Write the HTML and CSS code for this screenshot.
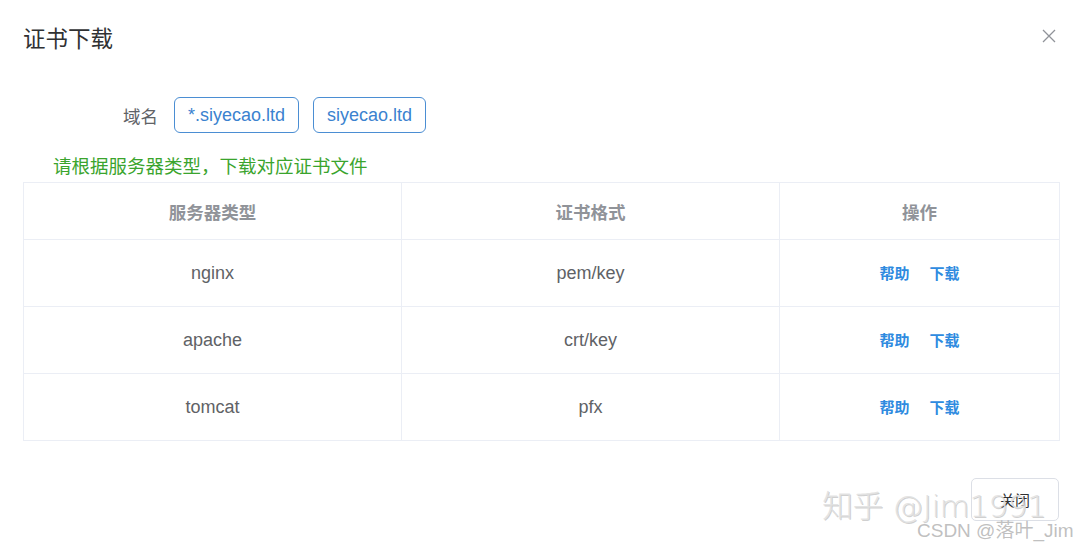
FILE: index.html
```html
<!DOCTYPE html>
<html lang="zh">
<head>
<meta charset="utf-8">
<link rel="stylesheet" href="styles.css">
</head>
<body>
<div class="dialog">
  <div class="header">
    <div class="title">证书下载</div>
    <svg class="close" width="14" height="14" viewBox="0 0 14 14"><path d="M1 1L13 13M13 1L1 13" stroke="#909399" stroke-width="1.3" fill="none"/></svg>
  </div>
  <div class="form-row">
    <div class="label">域名</div>
    <div class="tags">
      <span class="tag">*.siyecao.ltd</span>
      <span class="tag">siyecao.ltd</span>
    </div>
  </div>
  <div class="hint">请根据服务器类型，下载对应证书文件</div>
  <table class="table">
    <thead>
      <tr><th>服务器类型</th><th>证书格式</th><th>操作</th></tr>
    </thead>
    <tbody>
      <tr><td>nginx</td><td>pem/key</td><td><a class="link">帮助</a><a class="link">下载</a></td></tr>
      <tr><td>apache</td><td>crt/key</td><td><a class="link">帮助</a><a class="link">下载</a></td></tr>
      <tr><td>tomcat</td><td>pfx</td><td><a class="link">帮助</a><a class="link">下载</a></td></tr>
    </tbody>
  </table>
  <div class="footer">
    <button class="btn">关闭</button>
  </div>
</div>
<div class="wm wm-zhihu">知乎 @Jim1991</div>
<div class="wm wm-csdn">CSDN @落叶_Jim</div>
</body>
</html>
```
FILE: styles.css
```css
html, body {
  margin: 0;
  padding: 0;
  background: #fff;
  font-family: "Liberation Sans", Arial, "Noto Sans CJK SC", sans-serif;
  width: 1080px;
  height: 546px;
  overflow: hidden;
  position: relative;
}
.dialog {
  padding: 0 21px 0 23px;
}
.header {
  display: flex;
  justify-content: space-between;
  align-items: flex-start;
  height: 97px;
}
.title {
  margin-top: 28px;
  font-size: 22.5px;
  line-height: 24px;
  color: #303133;
}
.close {
  margin-top: 29px;
  margin-right: 3px;
}
.form-row {
  display: flex;
  align-items: center;
  height: 36px;
}
.label {
  width: 151px;
  text-align: right;
  padding-right: 16px;
  box-sizing: border-box;
  font-size: 17.5px;
  color: #606266;
}
.tags {
  display: flex;
  gap: 14px;
}
.tag {
  display: inline-flex;
  align-items: center;
  height: 36px;
  box-sizing: border-box;
  padding: 0 13px;
  border: 1px solid #4b8ed3;
  border-radius: 6px;
  color: #3b82cf;
  font-size: 18px;
}
.hint {
  margin-top: 20px;
  padding-left: 30px;
  font-size: 18.5px;
  line-height: 24px;
  color: #3aa42d;
  height: 29px;
  padding-top: 2px;
  box-sizing: border-box;
}
.table {
  width: 1037px;
  border-collapse: collapse;
  table-layout: fixed;
}
.table th, .table td {
  border: 1px solid #ebeef5;
  text-align: center;
  padding: 0;
}
.table th:nth-child(1), .table td:nth-child(1) { width: 377px; }
.table th:nth-child(2), .table td:nth-child(2) { width: 377px; }
.table th {
  height: 56px;
  font-size: 17.5px;
  font-weight: bold;
  color: #909399;
}
.table td {
  height: 66px;
  font-size: 18px;
  color: #606266;
}
.link {
  color: #2f8be0;
  font-size: 15px;
  font-weight: bold;
  margin: 0 10px;
  cursor: pointer;
}
.footer {
  display: flex;
  justify-content: flex-end;
  margin-top: 37px;
}
.btn {
  width: 88px;
  height: 43px;
  border: 1px solid #dcdfe6;
  border-radius: 5px;
  background: #fff;
  font-family: "Liberation Sans", "Noto Sans CJK SC", sans-serif;
  font-size: 15px;
  color: #303133;
  margin-right: 0;
}
.wm {
  position: absolute;
  white-space: nowrap;
}
.wm-zhihu {
  left: 822px;
  top: 481px;
  font-size: 31px;
  font-family: "DejaVu Sans", "Noto Sans CJK SC", sans-serif;
  font-weight: 200;
  letter-spacing: -0.5px;
  color: rgba(225, 225, 225, 0.9);
  text-shadow: 1px 1px 0 rgba(120, 120, 120, 0.35);
}
.wm-csdn {
  left: 917px;
  top: 515px;
  font-size: 19px;
  color: rgba(175, 175, 175, 0.8);
  font-family: "Liberation Sans", "Noto Sans CJK SC", sans-serif;
}
```
